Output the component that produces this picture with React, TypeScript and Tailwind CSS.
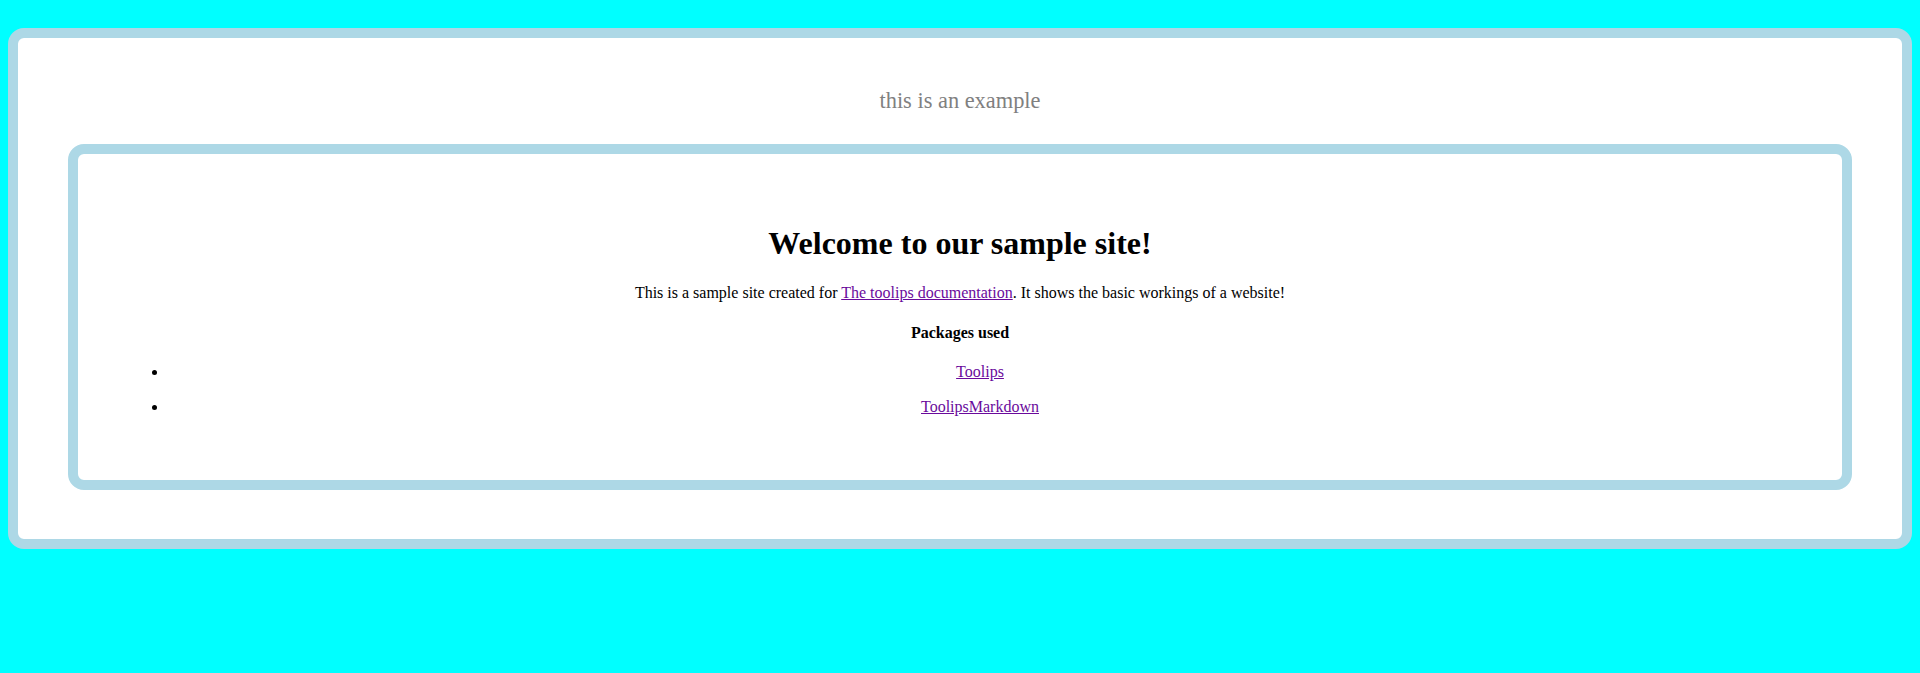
import React from "react";

export default function App() {
  return (
    <div
      className="min-h-[673px] bg-[#00ffff] px-2 pt-[28px] text-black"
      style={{ fontFamily: '"Liberation Serif", "Times New Roman", serif' }}
    >
      <div className="rounded-[16px] border-[10px] border-[#add8e6] bg-white pt-[50px] pb-[49px]">
        <div className="text-center text-[22.4px] leading-[26px] text-[#808080]">this is an example</div>
        <div className="mx-[50px] mt-[30px] rounded-[16px] border-[10px] border-[#add8e6] px-[50px] pt-[50px] pb-[48px] text-center">
          <h1 className="my-[21.44px] text-[32px] font-bold leading-[37px]">Welcome to our sample site!</h1>
          <p className="my-4 text-base leading-[18.4px]">
            This is a sample site created for{" "}
            <a href="#" className="text-[#6a0a9c] underline">
              The toolips documentation
            </a>
            . It shows the basic workings of a website!
          </p>
          <h4 className="my-[21.28px] text-base font-bold leading-[18.4px]">Packages used</h4>
          <ul className="my-4 list-disc pl-10 text-base leading-[18.4px]">
            <li>
              <p className="my-4">
                <a href="#" className="text-[#6a0a9c] underline">
                  Toolips
                </a>
              </p>
            </li>
            <li>
              <p className="my-4">
                <a href="#" className="text-[#6a0a9c] underline">
                  ToolipsMarkdown
                </a>
              </p>
            </li>
          </ul>
        </div>
      </div>
    </div>
  );
}
